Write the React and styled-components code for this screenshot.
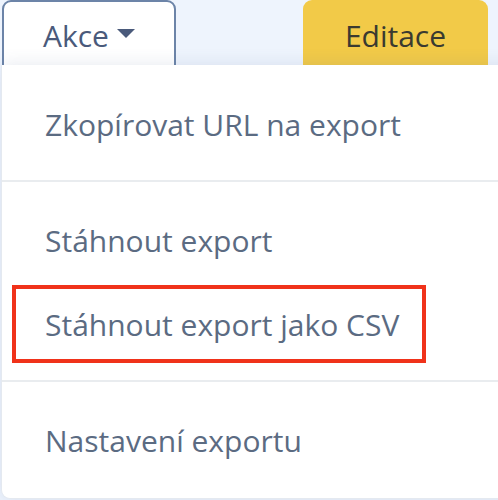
import React from "react";
import styled, { createGlobalStyle } from "styled-components";

const GlobalStyle = createGlobalStyle`
  html, body {
    margin: 0;
    padding: 0;
    background: #ffffff;
    overflow: hidden;
  }
  body {
    font-family: "Open Sans", "Noto Sans", sans-serif;
  }
`;

const Page = styled.div`
  width: 498px;
  height: 500px;
  overflow: hidden;
  background: #eef4fd;
`;

const Toolbar = styled.div`
  display: flex;
  align-items: flex-start;
  height: 65px;
  overflow: hidden;
  padding-left: 2px;
`;

const ActionButton = styled.button`
  display: flex;
  align-items: center;
  gap: 8px;
  box-sizing: border-box;
  width: 174px;
  height: 80px;
  padding: 0 0 10px 39px;
  border: 2px solid #6c84a8;
  border-radius: 9px;
  background: #ffffff;
  color: #4a5a7b;
  font-family: inherit;
  font-size: 30px;
  cursor: pointer;
`;

const Caret = styled.span`
  width: 0;
  height: 0;
  margin-top: -4px;
  border-left: 9px solid transparent;
  border-right: 9px solid transparent;
  border-top: 9px solid #4a5a7b;
`;

const EditButton = styled.button`
  box-sizing: border-box;
  width: 185px;
  height: 80px;
  margin-left: 127px;
  padding: 0 0 10px;
  border: none;
  border-radius: 9px;
  background: #f2ca48;
  color: #3a3a30;
  font-family: inherit;
  font-size: 30px;
`;

const Menu = styled.div`
  position: relative;
  box-sizing: border-box;
  width: 540px;
  height: 434px;
  margin-left: 1px;
  padding: 17px 0 13px;
  background: #ffffff;
  border: 1px solid #e4e9f0;
  border-top: none;
  border-radius: 0 0 9px 9px;
  box-shadow: 0 0 18px rgba(70, 95, 140, 0.14);
`;

const Item = styled.div`
  display: flex;
  align-items: center;
  height: 84px;
  padding-left: ${(p) => (p.$marked ? "10px" : "43px")};
  color: #5b6b82;
  font-size: 30px;
  white-space: nowrap;
`;

const Marked = styled.span`
  display: flex;
  align-items: center;
  box-sizing: border-box;
  width: 414px;
  height: 78px;
  padding-left: 29px;
  border: 4px solid #f0321a;
`;

const Divider = styled.div`
  height: 2px;
  margin: 14px 0 16px;
  background: #e9ecef;
`;

export default function App() {
  return (
    <Page>
      <GlobalStyle />
      <Toolbar>
        <ActionButton>
          Akce
          <Caret />
        </ActionButton>
        <EditButton>Editace</EditButton>
      </Toolbar>
      <Menu>
        <Item>Zkopírovat URL na export</Item>
        <Divider />
        <Item>Stáhnout export</Item>
        <Item $marked>
          <Marked>Stáhnout export jako CSV</Marked>
        </Item>
        <Divider />
        <Item>Nastavení exportu</Item>
      </Menu>
    </Page>
  );
}
